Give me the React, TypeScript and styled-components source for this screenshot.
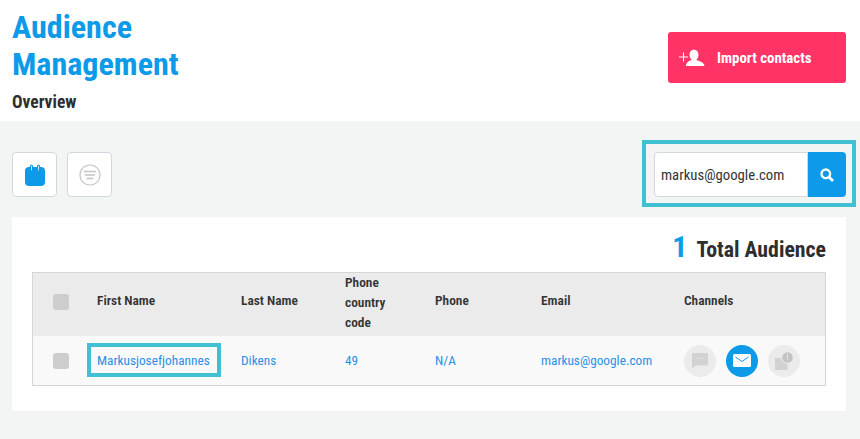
import React from "react";
import styled, { createGlobalStyle } from "styled-components";

const Global = createGlobalStyle`
  html, body { margin: 0; padding: 0; background: #f3f5f5; }
  body { font-family: Roboto, "Liberation Sans", sans-serif; color: #333; font-stretch: 75%; }
  * { box-sizing: border-box; }
`;
const Page = styled.div`width: 860px; height: 439px; overflow: hidden; display: flex; flex-direction: column;`;
const Header = styled.header`
  height: 121px; background: #fff; padding: 0 14px 0 12px;
  display: flex; justify-content: space-between; align-items: flex-start;
`;
const TitleBlock = styled.div`display: flex; flex-direction: column; padding-top: 9px;`;
const Title = styled.h1`
  margin: 0; color: #0d9ae8; font-size: 32.1px; line-height: 36.5px; font-weight: 700; font-stretch: 75%; width: 200px;
`;
const Subtitle = styled.div`font-size: 17.5px; font-weight: 700; line-height: 20px; margin-top: 10px; color: #2e2e2e;`;
const ImportButton = styled.button`
  margin-top: 32px; width: 178px; height: 51px; background: #ff3366; border: 0; border-radius: 3px; color: #fff;
  display: flex; align-items: center; padding: 0 0 0 11px; gap: 12px;
  font: 700 14.9px Roboto, sans-serif; font-stretch: 75%;
`;
const Toolbar = styled.div`
  padding: 19px 4px 10px 12px; display: flex; justify-content: space-between; align-items: flex-start;
`;
const ViewButtons = styled.div`display: flex; gap: 10px; padding-top: 12px;`;
const ViewButton = styled.button`
  width: 45px; height: 45px; padding: 0; background: #fff; border: 1px solid #d3d8de; border-radius: 4px;
  display: flex; align-items: center; justify-content: center;
`;
const SearchFrame = styled.div`
  width: 214px; height: 67px; border: 4px solid #41bfd3; padding: 8px 6px 8px 8px; display: flex;
`;
const SearchInput = styled.div`
  width: 154px; height: 45px; background: #fff; border: 1px solid #d3d8de; border-radius: 4px 0 0 4px;
  display: flex; align-items: center; padding-left: 6px; font-size: 14.75px; color: #333; font-stretch: 87%;
`;
const SearchButton = styled.div`
  width: 38px; height: 45px; background: #0d9ae8; border-radius: 0 4px 4px 0;
  display: flex; align-items: center; justify-content: center;
`;
const Card = styled.section`
  margin: 0 14px 0 12px; height: 194px; background: #fff; padding: 15px 20px 0;
`;
const TotalRow = styled.div`
  height: 40px; display: flex; justify-content: flex-end; align-items: baseline; gap: 9px; font-weight: 700; font-size: 21.8px; color: #2e2e2e;
`;
const TotalNumber = styled.span`color: #0d9ae8; font-size: 30px; line-height: 30px;`;
const Table = styled.div`border: 1px solid #d5d5d5; width: 794px;`;
const Row = styled.div<{ $head?: boolean }>`
  display: grid; grid-template-columns: 52px 144px 104px 90px 106px 143px 1fr; align-items: center;
  align-content: ${p => (p.$head ? "start" : "center")};
  height: ${p => (p.$head ? 63 : 49)}px;
  background: ${p => (p.$head ? "#ebebeb" : "#f9f9f9")};
  padding-left: 12px;
  font-size: ${p => (p.$head ? 13.4 : 13.3)}px;
  line-height: 20px;
  font-weight: ${p => (p.$head ? 600 : 400)};
  color: ${p => (p.$head ? "#333" : "#2a8fe6")};
`;
const HeadLabel = styled.div`margin-bottom: 4px;`;
const HeadLabelStacked = styled.div``;
const Check = styled.span`
  display: block; width: 16px; height: 16px; background: #cdcdcd; border-radius: 3px; margin-left: 8px;
`;
const HeadCheck = styled(Check)`margin-bottom: 2px;`;
const HighlightCell = styled.div`position: relative;`;
const Highlight = styled.span`
  position: absolute; left: -10px; top: -8px; width: 134px; height: 34px; border: 4px solid #41bfd3;
`;
const Channels = styled.div`display: flex; gap: 10px;`;
const Channel = styled.span<{ $active?: boolean }>`
  width: 32px; height: 32px; border-radius: 50%; background: ${p => (p.$active ? "#0d9ae8" : "#ebebeb")};
  display: flex; align-items: center; justify-content: center;
`;

const AddUser = () => (
  <svg width="26" height="18" viewBox="0 0 26 18">
    <path d="M0 8h9M4.500 3.500v9" stroke="#fff" strokeWidth="1.1" fill="none" />
    <ellipse cx="15" cy="6" rx="4.500" ry="5.500" fill="#fff" />
    <path d="M7 17c0-3.500 3-5 5.500-6h5c2.500 1 8 2.500 8 6z" fill="#fff" />
  </svg>
);

export default function App() {
  return (
    <Page>
      <Global />
      <Header>
        <TitleBlock>
          <Title>Audience Management</Title>
          <Subtitle>Overview</Subtitle>
        </TitleBlock>
        <ImportButton><AddUser />Import contacts</ImportButton>
      </Header>
      <Toolbar>
        <ViewButtons>
          <ViewButton aria-label="Calendar">
            <svg width="20" height="22" viewBox="0 0 20 22">
              <path d="M4 3h12a4 4 0 0 1 4 4v11a4 4 0 0 1-4 4H4a4 4 0 0 1-4-4V7a4 4 0 0 1 4-4z" fill="#0d9ae8" />
              <rect x="5" y="0.500" width="3" height="7" rx="1.500" fill="#0d9ae8" />
              <rect x="12" y="0.500" width="3" height="7" rx="1.500" fill="#0d9ae8" />
              <rect x="6" y="1.500" width="1" height="5" rx="0.500" fill="#bfe3f9" />
              <rect x="13" y="1.500" width="1" height="5" rx="0.500" fill="#bfe3f9" />
            </svg>
          </ViewButton>
          <ViewButton aria-label="List">
            <svg width="22" height="22" viewBox="0 0 22 22" fill="none" stroke="#c4c4c4">
              <circle cx="11" cy="11" r="10" strokeWidth="1.200" />
              <path d="M5 7.500h12M6 11h10M7.500 14.500h7" strokeWidth="1.500" />
            </svg>
          </ViewButton>
        </ViewButtons>
        <SearchFrame>
          <SearchInput>markus@google.com</SearchInput>
          <SearchButton>
            <svg width="14" height="14" viewBox="0 0 14 14" fill="none" stroke="#fff">
              <circle cx="5.800" cy="5.800" r="4.300" strokeWidth="2.400" />
              <path d="M9 9l4 4" strokeWidth="2.800" />
            </svg>
          </SearchButton>
        </SearchFrame>
      </Toolbar>
      <Card>
        <TotalRow><TotalNumber>1</TotalNumber>Total Audience</TotalRow>
        <Table>
          <Row $head>
            <HeadCheck />
            <HeadLabel>First Name</HeadLabel>
            <HeadLabel>Last Name</HeadLabel>
            <HeadLabelStacked>Phone<br />country<br />code</HeadLabelStacked>
            <HeadLabel>Phone</HeadLabel>
            <HeadLabel>Email</HeadLabel>
            <HeadLabel>Channels</HeadLabel>
          </Row>
          <Row>
            <Check />
            <HighlightCell><Highlight />Markusjosefjohannes</HighlightCell>
            <div>Dikens</div>
            <div>49</div>
            <div>N/A</div>
            <div>markus@google.com</div>
            <Channels>
              <Channel>
                <svg width="16" height="15" viewBox="0 0 16 15">
                  <path d="M1 0h14l1 1v10.500l-1 1H4l-3 2.500-1-1V1z" fill="#d2d2d2" />
                  <path d="M5.500 5.500h1M8 5.500h1M10.500 5.500h1" stroke="#ebebeb" strokeWidth="1" />
                </svg>
              </Channel>
              <Channel $active>
                <svg width="18" height="13" viewBox="0 0 18 13">
                  <rect width="18" height="13" rx="1.500" fill="#fff" />
                  <path d="M2.500 3L9 7.500 15.500 3" stroke="#0d9ae8" strokeWidth="1" fill="none" />
                </svg>
              </Channel>
              <Channel>
                <svg width="18" height="18" viewBox="0 0 18 18">
                  <path d="M0 6h12.500v12H0z" fill="#d2d2d2" />
                  <circle cx="12.500" cy="5.500" r="6.500" fill="#ebebeb" />
                  <circle cx="12.500" cy="5.500" r="5.300" fill="#c4c4c4" />
                  <path d="M12.500 2.500v3.500M12.500 7v1.200" stroke="#ebebeb" strokeWidth="1" />
                </svg>
              </Channel>
            </Channels>
          </Row>
        </Table>
      </Card>
    </Page>
  );
}
